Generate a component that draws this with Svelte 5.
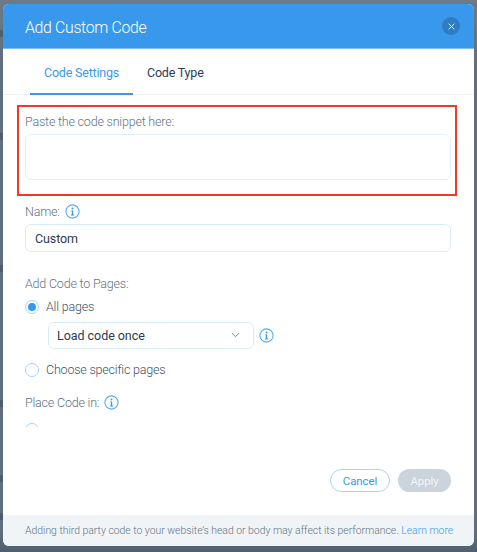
<script>
  const tabs = ['Code Settings', 'Code Type'];
  const edgeMarks = [30, 133, 265, 400, 475, 513];
</script>

{#snippet infoIcon()}
  <svg class="info" width="15" height="15" viewBox="0 0 15 15" aria-hidden="true">
    <circle cx="7.5" cy="7.5" r="6.6" fill="none" stroke="#5aaaf0" stroke-width="1.1" />
    <circle cx="7.5" cy="4.4" r="1" fill="#3899ec" />
    <path d="M6.2 6.4h2v4.2h.9v.8H5.9v-.8h.9V7.2h-.6z" fill="#3899ec" />
  </svg>
{/snippet}

<div class="page">
  {#each edgeMarks as y}
    <span class="mark" style="top: {y}px"></span>
  {/each}
  <div class="dialog">
    <header class="head">
      <h1>Add Custom Code</h1>
      <button class="close" aria-label="Close">
        <svg width="7" height="7" viewBox="0 0 7 7"><path d="M.7.7l5.6 5.6M6.3.7L.7 6.3" stroke="#fff" stroke-width="1" fill="none" /></svg>
      </button>
    </header>

    <nav class="tabs">
      {#each tabs as t, i}
        <div class="tab" class:active={i === 0}>{t}</div>
      {/each}
    </nav>

    <div class="content">
      <section class="highlight">
        <div class="label">Paste the code snippet here:</div>
        <div class="area"></div>
      </section>

      <div class="label name-label">Name: {@render infoIcon()}</div>
      <div class="input">Custom</div>

      <div class="label pages-label">Add Code to Pages:</div>
      <div class="radio-row first">
        <span class="radio on"></span>All pages
      </div>
      <div class="select-row">
        <div class="select">
          <span>Load code once</span>
          <svg width="9" height="6" viewBox="0 0 9 6"><path d="M.8 1l3.7 3.7L8.2 1" fill="none" stroke="#3899ec" stroke-width="1" /></svg>
        </div>
        {@render infoIcon()}
      </div>
      <div class="radio-row second">
        <span class="radio"></span>Choose specific pages
      </div>
      <div class="label place-label">Place Code in: {@render infoIcon()}</div>
      <div class="clip"><span class="radio"></span></div>
    </div>

    <div class="actions">
      <button class="btn cancel">Cancel</button>
      <button class="btn apply">Apply</button>
    </div>

    <footer class="foot">
      Adding third party code to your website’s head or body may affect its performance. <span class="link">Learn more</span>
    </footer>
  </div>
</div>

<style>
  :global(body) {
    margin: 0;
    background: #5f6f7d;
  }
  .page {
    position: relative;
    height: 552px;
    box-sizing: border-box;
    padding: 4px 3px 6px;
    background: linear-gradient(#6c7b87, #5f6f7d 12%, #5f6f7d 96%, #50606e);
    font-family: Roboto, "Liberation Sans", Arial, sans-serif;
    font-weight: 300;
    overflow: hidden;
  }
  .mark {
    position: absolute;
    left: 0;
    width: 3px;
    height: 7px;
    background: #46525e;
    opacity: 0.6;
  }
  .dialog {
    height: 542px;
    background: #fff;
    border-radius: 6px;
    overflow: hidden;
    display: flex;
    flex-direction: column;
  }
  .head {
    height: 44px;
    flex: none;
    background: #3899ec;
    border-bottom: 1px solid #7cbcf3;
    display: flex;
    align-items: center;
    justify-content: space-between;
    padding: 0 14px 0 22px;
  }
  h1 {
    margin: 0;
    font-size: 15.8px;
    letter-spacing: -0.3px;
    font-weight: 300;
    color: #fff;
    position: relative;
    top: 1px;
  }
  .close {
    width: 18px;
    height: 18px;
    border: 0;
    padding: 0;
    border-radius: 50%;
    background: #2f7cc0;
    display: flex;
    align-items: center;
    justify-content: center;
  }
  .tabs {
    flex: none;
    height: 45px;
    border-bottom: 1px solid #eef2f5;
    display: flex;
    padding-left: 27px;
  }
  .tab {
    font-size: 12.5px;
    letter-spacing: -0.2px;
    color: #2b3c4f;
    font-weight: 400;
    padding: 16px 14px 0;
    height: 46px;
    box-sizing: border-box;
  }
  .tab.active {
    color: #3899ec;
    border-bottom: 2px solid #3899ec;
    width: 103px;
    text-align: center;
    padding: 16px 0 0;
  }
  .content {
    flex: 1;
    min-height: 0;
    overflow: hidden;
    display: flex;
    flex-direction: column;
    padding: 10px 23px 0 14px;
  }
  .label {
    font-size: 12.5px;
    letter-spacing: -0.2px;
    color: #5f7386;
    display: flex;
    align-items: center;
    gap: 5px;
    line-height: 15px;
  }
  .highlight {
    height: 91px;
    box-sizing: border-box;
    border: 2px solid #ef3a26;
    padding: 7px 5px 0 6px;
    flex: none;
    margin-right: -6px;
  }
  .area {
    height: 46px;
    border: 1px solid #e3f0fb;
    border-radius: 6px;
    box-sizing: border-box;
    margin-top: 5px;
    margin-right: -1px;
  }
  .name-label,
  .pages-label,
  .place-label,
  .input,
  .radio-row,
  .select-row,
  .clip {
    margin-left: 8px;
  }
  .name-label {
    margin-top: 8px;
    height: 16px;
  }
  .input {
    height: 28px;
    margin-top: 4px;
    box-sizing: border-box;
    border: 1px solid #d9ebfa;
    border-radius: 6px;
    padding-left: 9px;
    font-size: 12.5px;
    letter-spacing: -0.1px;
    color: #2b3c4f;
    font-weight: 400;
    line-height: 27px;
  }
  .pages-label {
    margin-top: 24px;
  }
  .radio-row {
    display: flex;
    align-items: center;
    gap: 7px;
    font-size: 12.5px;
    letter-spacing: -0.2px;
    color: #3f5265;
    height: 14px;
  }
  .radio-row.first {
    margin-top: 9px;
  }
  .radio-row.second {
    margin-top: 14px;
  }
  .radio {
    width: 14px;
    height: 14px;
    box-sizing: border-box;
    flex: none;
    border: 1px solid #a8d2f6;
    border-radius: 50%;
    display: block;
    position: relative;
  }
  .radio.on::after {
    content: "";
    position: absolute;
    inset: 2px;
    border-radius: 50%;
    background: #3899ec;
  }
  .select-row {
    display: flex;
    align-items: center;
    gap: 5px;
    margin-top: 8px;
    padding-left: 23px;
  }
  .select {
    width: 206px;
    height: 27px;
    box-sizing: border-box;
    border: 1px solid #d9ebfa;
    border-radius: 6px;
    display: flex;
    align-items: center;
    justify-content: space-between;
    padding: 0 13px 0 8px;
    font-size: 12.5px;
    letter-spacing: -0.05px;
    font-weight: 400;
    color: #2b3c4f;
  }
  .place-label {
    margin-top: 18px;
    height: 16px;
  }
  .clip {
    margin-top: 13px;
    height: 4px;
    overflow: hidden;
    flex: none;
  }
  .info {
    flex: none;
  }
  .actions {
    flex: none;
    height: 88px;
    box-sizing: border-box;
    display: flex;
    justify-content: flex-end;
    gap: 8px;
    padding: 42px 23px 0 0;
  }
  .btn {
    height: 23px;
    border-radius: 12px;
    font-family: inherit;
    font-size: 11.5px;
    letter-spacing: -0.1px;
    font-weight: 400;
    padding: 0;
  }
  .cancel {
    width: 60px;
    border: 1px solid #a8d2f6;
    background: #fff;
    color: #3899ec;
  }
  .apply {
    width: 53px;
    border: 0;
    background: #cbd3dc;
    color: #f2f5f7;
  }
  .foot {
    flex: none;
    height: 31px;
    box-sizing: border-box;
    background: #f0f4f7;
    font-size: 10.4px;
    color: #5f7386;
    padding-left: 22px;
    line-height: 31px;
    white-space: nowrap;
  }
  .link {
    color: #3899ec;
  }
</style>
